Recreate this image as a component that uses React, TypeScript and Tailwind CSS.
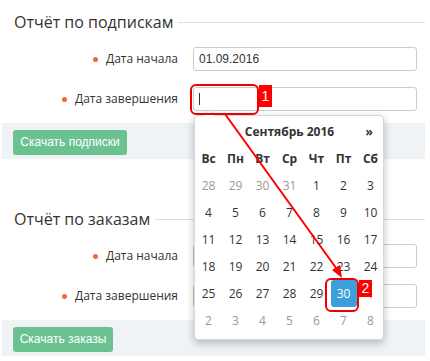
import React from 'react'

const sans = { fontFamily: '"Open Sans", "Liberation Sans", sans-serif' }

type Day = { d: number; muted?: boolean; active?: boolean }

const weekDays = ['Вс', 'Пн', 'Вт', 'Ср', 'Чт', 'Пт', 'Сб']

// September 2016, weeks start on Sunday
const weeks: Day[][] = [
  [{ d: 28, muted: true }, { d: 29, muted: true }, { d: 30, muted: true }, { d: 31, muted: true }, { d: 1 }, { d: 2 }, { d: 3 }],
  [{ d: 4 }, { d: 5 }, { d: 6 }, { d: 7 }, { d: 8 }, { d: 9 }, { d: 10 }],
  [{ d: 11 }, { d: 12 }, { d: 13 }, { d: 14 }, { d: 15 }, { d: 16 }, { d: 17 }],
  [{ d: 18 }, { d: 19 }, { d: 20 }, { d: 21 }, { d: 22 }, { d: 23 }, { d: 24 }],
  [{ d: 25 }, { d: 26 }, { d: 27 }, { d: 28 }, { d: 29 }, { d: 30, active: true }, { d: 1, muted: true }],
  [{ d: 2, muted: true }, { d: 3, muted: true }, { d: 4, muted: true }, { d: 5, muted: true }, { d: 6, muted: true }, { d: 7, muted: true }, { d: 8, muted: true }],
]

function FieldRow({ label, value, cursor }: { label: string; value?: string; cursor?: boolean }) {
  return (
    <div className="flex items-center h-[24px]">
      <div className="w-[178px] flex items-center justify-end text-[12px] text-[#333]" style={sans}>
        <span className="w-[5px] h-[5px] rounded-full bg-[#ee6a3e] mr-[8px]" />
        {label}
      </div>
      <div
        className="ml-[15px] w-[224px] h-[24px] border border-[#c9ccd3] rounded-[3px] bg-white flex items-center pl-[5px] text-[12px] text-[#333]"
        style={{ fontFamily: '"Liberation Sans", Arial, sans-serif' }}
      >
        {value}
        {cursor && <span className="w-px h-[12px] bg-[#333]" />}
      </div>
    </div>
  )
}

function Section({ title, button, btnWidth, second }: { title: string; button: string; btnWidth: string; second?: boolean }) {
  return (
    <div>
      <div className="flex items-center h-[28px] pl-[14px] pr-[5px]">
        <h2 className="text-[16px] text-[#333] leading-none" style={sans}>{title}</h2>
        <div className="flex-1 h-px bg-[#dadde2] ml-[5px]" />
      </div>
      <div className="mt-[11px] flex flex-col gap-[16px]">
        <FieldRow label="Дата начала" value={second ? '' : '01.09.2016'} />
        <FieldRow label="Дата завершения" cursor={!second} />
      </div>
      <div className="mt-[12px] ml-[2px] mr-[5px] h-[36px] bg-[#eff3f6] pt-[5px] pl-[11px]">
        <button
          className={`${btnWidth} h-[25px] rounded-[3px] bg-[#69c28f] text-white text-[12px]`}
          style={{ fontFamily: '"Liberation Sans", Arial, sans-serif' }}
        >
          {button}
        </button>
      </div>
    </div>
  )
}

function Calendar() {
  return (
    <div
      className="absolute left-[194px] top-[115px] w-[190px] h-[225px] bg-white border border-[#d5d8dc] rounded-[4px] shadow-[0_3px_8px_rgba(0,0,0,0.25)] pt-[2px]"
      style={sans}
    >
      <div className="absolute -top-[5px] left-[10px] w-[9px] h-[9px] bg-white border-l border-t border-[#d5d8dc] rotate-45" />
      <div className="grid grid-cols-[repeat(7,27px)] text-[12px] text-[#333]">
        <div className="col-span-7 relative h-[27px] flex items-center justify-center font-bold">
          Сентябрь 2016
          <span className="absolute right-[11px]">»</span>
        </div>
        {weekDays.map((w) => (
          <div key={w} className="h-[27px] flex items-center justify-center font-bold">
            {w}
          </div>
        ))}
        {weeks.flat().map((day, i) => (
          <div key={i} className="h-[27px] flex items-center justify-center">
            {day.active ? (
              <span className="w-[26px] h-[27px] rounded-[3px] bg-[#3d9edc] text-white flex items-center justify-center">
                {day.d}
              </span>
            ) : (
              <span className={day.muted ? 'text-[#999]' : ''}>{day.d}</span>
            )}
          </div>
        ))}
      </div>
    </div>
  )
}

function Callouts() {
  return (
    <>
      <div className="absolute left-[190px] top-[84px] w-[69px] h-[31px] border-2 border-[#e00] rounded-[6px]" />
      <div className="absolute left-[259px] top-[85px] w-[13px] h-[22px] bg-[#f00] text-white text-[14px] flex items-center justify-center" style={{ fontFamily: '"Liberation Sans", Arial, sans-serif' }}>
        1
      </div>
      <div className="absolute left-[325px] top-[278px] w-[34px] h-[34px] border-2 border-[#e00] rounded-[6px]" />
      <div className="absolute left-[359px] top-[280px] w-[13px] h-[17px] bg-[#f00] text-white text-[14px] flex items-center justify-center" style={{ fontFamily: '"Liberation Sans", Arial, sans-serif' }}>
        2
      </div>
      <svg className="absolute left-0 top-0 pointer-events-none" width="430" height="361">
        <line x1="225" y1="114" x2="339" y2="272" stroke="#f00" strokeWidth="2" />
        <polygon points="342,278 332,270 340,265" fill="#f00" />
      </svg>
    </>
  )
}

export default function App() {
  return (
    <div className="relative w-[430px] h-[361px] bg-white overflow-hidden">
      <div className="pt-[8px]">
        <Section title="Отчёт по подпискам" button="Скачать подписки" btnWidth="w-[114px]" />
        <div className="mt-[46px]">
          <Section title="Отчёт по заказам" button="Скачать заказы" btnWidth="w-[100px]" second />
        </div>
      </div>
      <Calendar />
      <Callouts />
    </div>
  )
}
